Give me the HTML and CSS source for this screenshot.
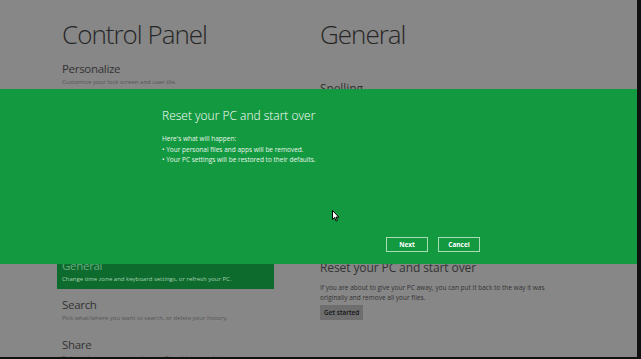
FILE: index.html
```html
<!DOCTYPE html>
<html lang="en">

<head>
    <meta charset="UTF-8">
    <meta name="viewport" content="width=device-width, initial-scale=1.0">
    <title>Control Panel</title>
    <link rel="stylesheet" href="styles.css">
</head>

<body>
    <div class="screen">
        <div class="panel">
            <div class="column">
                <h1>Control Panel</h1>
                <div class="item">
                    <div class="item-title">Personalize</div>
                    <div class="item-sub">Customize your lock screen and user tile.</div>
                </div>
                <div class="item">
                    <div class="item-title">Users</div>
                    <div class="item-sub">Change your account or add new ones.</div>
                </div>
                <div class="item">
                    <div class="item-title">Wireless</div>
                    <div class="item-sub">Turn wireless devices on or off.</div>
                </div>
                <div class="item">
                    <div class="item-title">Notifications</div>
                    <div class="item-sub">Choose if apps notify you.</div>
                </div>
                <div class="item">
                    <div class="item-title">Privacy</div>
                    <div class="item-sub">Control what apps can use.</div>
                </div>
                <div class="item selected">
                    <div class="item-title">General</div>
                    <div class="item-sub">Change time zone and keyboard settings, or refresh your PC.</div>
                </div>
                <div class="item">
                    <div class="item-title">Search</div>
                    <div class="item-sub">Pick what/where you want to search, or delete your history.</div>
                </div>
                <div class="item">
                    <div class="item-title">Share</div>
                    <div class="item-sub">Pick which apps you use to share stuff, or delete your history.</div>
                </div>
            </div>

            <div class="column">
                <h1>General</h1>
                <div class="section spelling">
                    <div class="section-title">Spelling</div>
                </div>
                <div class="section refresh">
                    <div class="section-title">Refresh your PC without affecting your files</div>
                </div>
                <div class="section">
                    <div class="section-title">Reset your PC and start over</div>
                    <p class="section-text">If you are about to give your PC away, you can put it back to the way it was originally and remove all your files.</p>
                    <button class="plain-button">Get started</button>
                </div>
            </div>
        </div>

        <div class="dialog">
            <div class="dialog-body">
                <div class="dialog-title">Reset your PC and start over</div>
                <div class="dialog-text">
                    <div>Here's what will happen:</div>
                    <div>&bull; Your personal files and apps will be removed.</div>
                    <div>&bull; Your PC settings will be restored to their defaults.</div>
                </div>
                <div class="dialog-buttons">
                    <button class="dialog-button">Next</button>
                    <button class="dialog-button">Cancel</button>
                </div>
            </div>
        </div>

        <svg class="cursor" width="8" height="12" viewBox="0 0 8 12">
            <path d="M0.5 0.5 L0.5 9.5 L2.6 7.6 L4.1 11 L5.4 10.4 L3.9 7.1 L6.8 7.1 Z" fill="#fff" stroke="#000" stroke-width="1"/>
        </svg>
    </div>
</body>

</html>
```

FILE: styles.css
```css
html {
    background: #111;
}

body {
    margin: 0;
    font-family: "Open Sans", "Noto Sans", sans-serif;
    overflow: hidden;
}

.screen {
    position: relative;
    width: 637px;
    height: 357px;
    background: #878787;
    overflow: hidden;
}

.panel {
    display: grid;
    grid-template-columns: 258px 1fr;
    padding-left: 62px;
    padding-top: 18px;
}

h1 {
    margin: 0;
    font-size: 26px;
    line-height: 33px;
    font-weight: 300;
    letter-spacing: -1px;
    color: #262626;
}

.column > h1 + .item {
    margin-top: 6px;
}

.item {
    margin-left: -5px;
    width: 207px;
    padding: 4px 5px 5px;
    margin-bottom: 4.4px;
}

.item.selected {
    background: #0d6b2d;
}

.item-title {
    font-size: 11.5px;
    line-height: 16px;
    letter-spacing: -0.3px;
    color: #333;
}

.item-sub {
    font-size: 6px;
    line-height: 10px;
    color: #555;
    white-space: nowrap;
}

.selected .item-title {
    color: #6aab80;
}

.selected .item-sub {
    color: #a5cfb1;
}

.section.spelling {
    margin-top: 30px;
    height: 90px;
}

.section.refresh {
    height: 89px;
}

.section-title {
    font-size: 12px;
    line-height: 16px;
    letter-spacing: -0.1px;
    color: #333;
}

.section-text {
    margin: 7px 0 2px;
    width: 240px;
    font-size: 6.5px;
    line-height: 10px;
    color: #333;
}

.plain-button {
    display: block;
    height: 15px;
    padding: 0 4px;
    border: none;
    background: #6e6e6e;
    font-family: inherit;
    font-size: 6.5px;
    font-weight: 600;
    color: #151515;
}

.dialog {
    position: absolute;
    top: 89px;
    left: 0;
    right: 0;
    height: 175px;
    background: #13993f;
}

.dialog-body {
    display: flex;
    flex-direction: column;
    box-sizing: border-box;
    width: 318px;
    height: 100%;
    margin-left: 162px;
    padding: 19px 0 12px;
}

.dialog-title {
    font-size: 12px;
    line-height: 16px;
    font-weight: 300;
    color: #fff;
}

.dialog-text {
    margin-top: 10px;
    font-size: 6.5px;
    line-height: 10.5px;
    color: #e8f5ec;
}

.dialog-buttons {
    display: flex;
    justify-content: flex-end;
    gap: 10px;
    margin-top: auto;
}

.dialog-button {
    width: 42px;
    height: 15px;
    padding: 0;
    border: 1.5px solid #a9dcb6;
    background: #13993f;
    font-family: inherit;
    font-size: 6.5px;
    font-weight: 700;
    color: #fff;
}

.cursor {
    position: absolute;
    left: 332px;
    top: 210px;
}
```
